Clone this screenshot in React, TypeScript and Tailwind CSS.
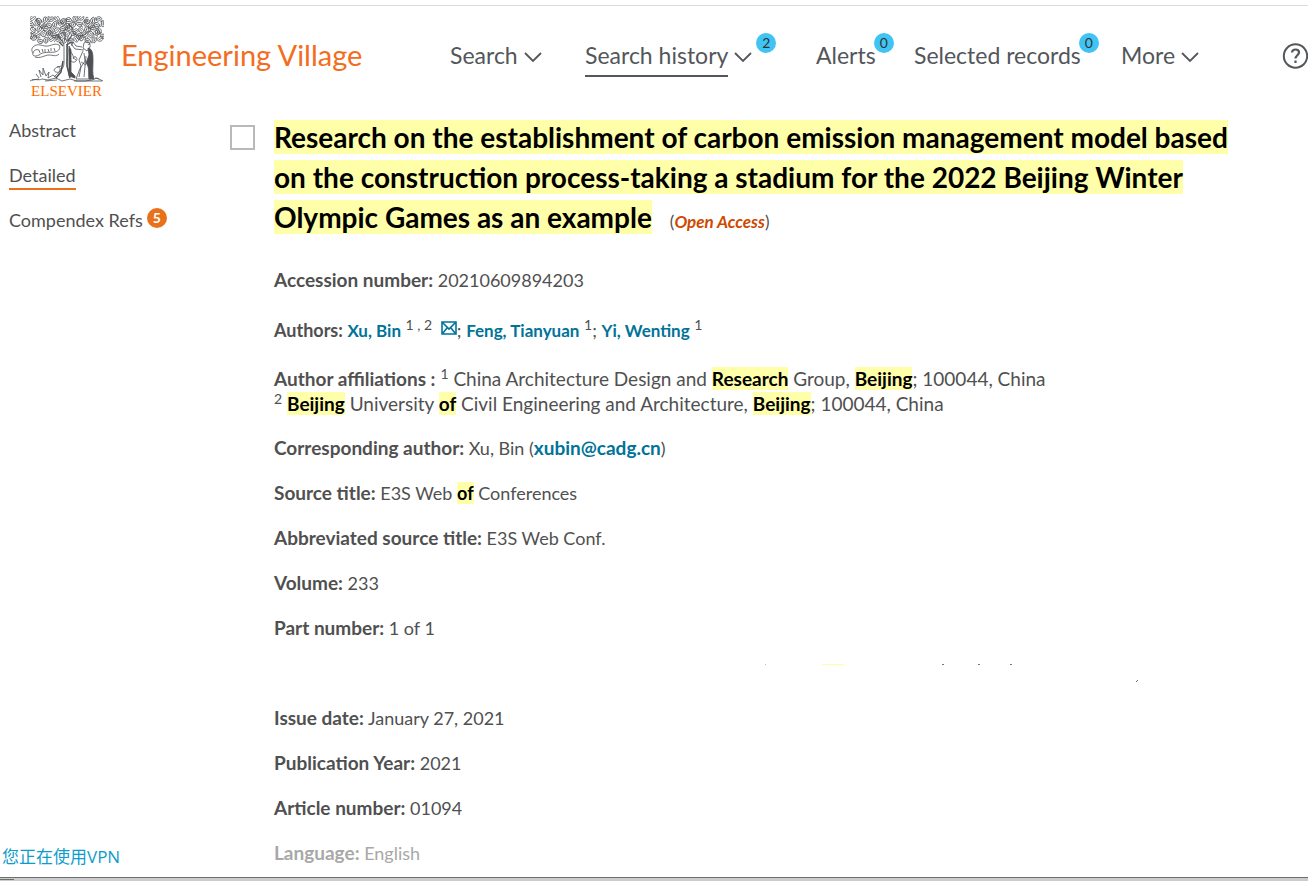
import React, { useState } from 'react';

interface NavItem {
  label: string;
  width: string;
  menu?: boolean;
  badge?: number;
  active?: boolean;
}

const NAV_ITEMS: NavItem[] = [
  { label: 'Search', width: 'w-[135px]', menu: true },
  { label: 'Search history', width: 'w-[231px]', menu: true, badge: 2, active: true },
  { label: 'Alerts', width: 'w-[98px]', badge: 0 },
  { label: 'Selected records', width: 'w-[207px]', badge: 0 },
  { label: 'More', width: 'w-[88px]', menu: true },
];

// Leaf clusters of the tree crown, one row per line
const LEAF_ROWS = [
  { y: 3, from: 3, to: 72 },
  { y: 8, from: 1, to: 73 },
  { y: 13, from: 3, to: 72 },
  { y: 18, from: 1, to: 73 },
  { y: 23, from: 4, to: 71 },
];

const leaves = LEAF_ROWS.flatMap((row, r) => {
  const items: { x: number; y: number; rot: number }[] = [];
  for (let x = row.from, i = 0; x <= row.to; x += 6, i++) {
    items.push({ x, y: row.y + ((i * 3 + r) % 4) - 1, rot: (i * 67 + r * 41) % 360 });
  }
  return items;
});

const TreeLogo = () => (
  <svg viewBox="0 0 74 66" className="w-[74px] h-[66px]" fill="none" stroke="#4d5054" strokeWidth="0.8" aria-hidden="true">
    {leaves.map((l, i) => (
      <path
        key={i}
        transform={`translate(${l.x} ${l.y}) rotate(${l.rot})`}
        d="M-3 1C-3-1-1-3 1-2C3-2 3 0 1 1C0 3-2 3-3 1M-2 1L1-1M2 2C3 3 4 1 3 0"
      />
    ))}
    <path d="M13 14l9 6 8-2M61 14l-9 6-9-2M36 2v10l-5 6M38 7l5 6" />
    {/* trunk */}
    <path d="M31 24c3 2 3 5 3 9v14c0 6-5 9-10 14M39 23c-2 3-2 7-1 11l-1 13c0 6 2 10 7 15" />
    <path d="M37 28v22l3 12M33 45l-2 11-5 6" strokeWidth="1.5" />
    <path d="M32 25l-4-5M38 25l4-6M35 24v-8M29 26l4 4M41 26l-4 3" strokeWidth="1.2" />
    {/* banner */}
    <path d="M3 31c5-5 10 0 15-1s7-3 11-1c2 3 0 6-4 7-6 1-11-1-16 3-4 2-7 1-6-2 1-3 3-4 6-3M3 31c-2 2-1 5 0 6M5 41c5 2 10-2 14-2 4 0 7 2 10-1" />
    <path d="M9 34l1 3m2-4 1 3m2-3v3m3-3 1 3m2-4v3m3-3 1 3" />
    {/* vine */}
    <path d="M40 44c4 5 9 0 6-3-2-1-4 1-2 2M40 35c4 4 3 8 6 9M24 54c3-5 7-3 6 0-1 4-6 2-6 0m3-3 4-1" />
    {/* standing figure */}
    <path d="M54 27c3-3 7 0 6 4l-3 4-4-3zM54 34l-9-1-3-4 1-3 3 4 6 1M42 30l-1-3 3-1M53 35l-4 9 2 6-5 13h15l-3-17 2-11" />
    <path d="M58 32c5 1 5 7 5 13 0 7-1 12 1 18h-5c-1-7 1-11-3-16l3-8z" fill="#4d5054" />
    <path d="M54 37l1 8-4 6-2 10M56 40l-1 10-1 11M51 46l5 3M40 27l2-1" />
    <path d="M39 30v30l6 2v-2l-4-4V34z" fill="#4d5054" />
    {/* ground */}
    <path d="M0 65c5-3 8 0 12-2l6 1 8-2 6 3 8-2 7 2h8l7-1 5-2 6 3M2 64l7-1M15 65l12-1M44 65h28" />
    <path d="M11 61l-2-7 4 5v-7l3 8 3-4-1 6 5-3 4 3M9 62l-3-4M65 62l4 1" />
  </svg>
);

const Chevron = () => (
  <svg viewBox="0 0 18 12" className="w-[18px] h-3 ml-1.5 mt-1 shrink-0" fill="none" stroke="#53565a" strokeWidth="1.8" aria-hidden="true">
    <path d="M1 2l8 8 8-8" />
  </svg>
);

const Envelope = () => (
  <svg viewBox="0 0 16 14" className="inline w-4 h-3.5 relative -top-1" fill="none" stroke="#007398" strokeWidth="1.6" aria-hidden="true">
    <path d="M1 1h14v12H1zM2 2l6 6 6-6M2 12l4-5M14 12l-4-5" />
  </svg>
);

const Mark = ({ children }: { children: React.ReactNode }) => (
  <mark className="bg-[#ffffaa] text-black font-bold">{children}</mark>
);

const Sup = ({ children }: { children: React.ReactNode }) => (
  <sup className="text-sm leading-none">{children}</sup>
);

const Author = ({ children }: { children: React.ReactNode }) => (
  <a href="#author" className="text-[#007398] font-bold text-[17px]">{children}</a>
);

const Field = ({ label, children }: { label: string; children: React.ReactNode }) => (
  <p className="mb-5">
    <b className="text-[19px] leading-none">{label}</b> {children}
  </p>
);

const App: React.FC = () => {
  const [selected, setSelected] = useState(false);

  return (
    <div className="min-h-screen flex flex-col bg-white text-[#505050] font-['Lato',sans-serif] overflow-x-hidden">
      <header className="mt-[5px] border-t border-[#dcdcdc] h-[105px] flex items-start shrink-0">
        <a href="#home" className="flex items-start ml-[29px] w-[421px] shrink-0">
          <span className="flex flex-col items-center w-[75px] mt-2.5">
            <TreeLogo />
            <span className="font-['Liberation_Serif',serif] text-[15px] leading-[18px] text-[#ff6c00]">ELSEVIER</span>
          </span>
          <span className="ml-[17px] mt-[31px] text-[29px] leading-9 text-[#f36d21] whitespace-nowrap">Engineering Village</span>
        </a>
        <nav className="flex mt-[31px] text-[23px] leading-9 text-[#53565a] whitespace-nowrap">
          {NAV_ITEMS.map(item => (
            <div key={item.label} className={`${item.width} shrink-0`}>
              <button className="relative flex items-start">
                <span className={item.active ? 'pb-0.5 border-b-2 border-[#53565a]' : 'pb-0.5 border-b-2 border-transparent'}>
                  {item.label}
                </span>
                {item.menu && <span className="mt-2.5 flex"><Chevron /></span>}
                {item.badge !== undefined && (
                  <span className={`absolute left-full -top-1 size-5 rounded-full bg-[#3fc4f3] text-[#323232] text-sm leading-5 text-center ${item.menu ? 'ml-1' : '-ml-0.5'}`}>
                    {item.badge}
                  </span>
                )}
              </button>
            </div>
          ))}
        </nav>
        <button aria-label="Help" className="ml-auto mt-[37px] shrink-0">
          <svg viewBox="0 0 26 26" className="size-[26px]" fill="none" stroke="#53565a" strokeWidth="2" aria-hidden="true">
            <circle cx="13.5" cy="13" r="11.7" />
            <path d="M10 9.5c.3-4 7-4 7 0 0 2.5-3.5 3-3.5 6M13.5 17.5v2.5" strokeWidth="2.2" />
          </svg>
        </button>
      </header>

      <div className="flex flex-1">
        <aside className="w-[230px] shrink-0 flex flex-col justify-between">
          <ul className="ml-[9px] mt-2 flex flex-col gap-5 text-lg leading-[25px]">
            <li><a href="#abstract">Abstract</a></li>
            <li><a href="#detailed" className="inline-block border-b-2 border-[#e9711c] -mb-0.5">Detailed</a></li>
            <li className="flex">
              <a href="#refs">Compendex Refs</a>
              <span className="ml-1 size-5 rounded-full bg-[#e9711c] text-white font-bold text-sm leading-5 text-center">5</span>
            </li>
          </ul>
          <a href="#vpn" className="ml-0.5 mb-2 text-[17px] leading-6 text-[#0d9ccc] font-['Open_Sans','Noto_Sans_CJK_SC',sans-serif]">您正在使用VPN</a>
        </aside>

        <main className="flex flex-1 items-start">
          <input
            type="checkbox"
            aria-label="Select record"
            checked={selected}
            onChange={() => setSelected(!selected)}
            className="appearance-none size-[25px] border-2 border-[#b9b9b9] checked:bg-[#b9b9b9] mt-[15px] mr-[19px] shrink-0"
          />
          <article className="flex-1 text-lg leading-[25px] mt-[7px]">
            <h1 className="text-[28px] leading-10 text-black font-bold mb-[31px] whitespace-nowrap">
              <Mark>Research on the establishment of carbon emission management model based</Mark><br />
              <Mark>on the construction process-taking a stadium for the 2022 Beijing Winter</Mark><br />
              <Mark>Olympic Games as an example</Mark>
              <span className="ml-[18px] text-[17px] leading-none font-normal text-[#505050]">
                (<a href="#open-access" className="italic font-bold text-[#cd4a00]">Open Access</a>)
              </span>
            </h1>

            <Field label="Accession number:">20210609894203</Field>
            <p className="mb-[23px] mt-[25px]">
              <b>Authors:</b> <Author>Xu, Bin</Author> <Sup>1 , 2</Sup>{' '}
              <a href="#mail" aria-label="Email author" className="ml-1"><Envelope /></a>;{' '}
              <Author>Feng, Tianyuan</Author> <Sup>1</Sup>; <Author>Yi, Wenting</Author> <Sup>1</Sup>
            </p>
            <p className="mb-5 text-[19px]">
              <b>Author affiliations :</b> <Sup>1</Sup> China Architecture Design and <Mark>Research</Mark> Group, <Mark>Beijing</Mark>; 100044, China
              <br />
              <Sup>2</Sup> <Mark>Beijing</Mark> University <Mark>of</Mark> Civil Engineering and Architecture, <Mark>Beijing</Mark>; 100044, China
            </p>
            <Field label="Corresponding author:">
              Xu, Bin (<a href="#corresponding" className="text-[#007398] font-bold text-[19px] leading-none">xubin@cadg.cn</a>)
            </Field>
            <Field label="Source title:">E3S Web <Mark>of</Mark> Conferences</Field>
            <Field label="Abbreviated source title:">E3S Web Conf.</Field>
            <Field label="Volume:">233</Field>
            <Field label="Part number:">1 of 1</Field>
            {/* blank row, only stray pixels left in it */}
            <svg viewBox="0 0 1034 25" className="block w-[1034px] h-[25px] mb-5" aria-hidden="true">
              <path d="M491 3.5h1" stroke="#a9c4e0" />
              <path d="M548 3.5h22" stroke="#ffffaa" />
              <path d="M668 3.5h2M704 3.5h2M736 3.5h2" stroke="#777777" />
              <path d="M862 21l2-2" stroke="#4b6f91" />
            </svg>
            <Field label="Issue date:">January 27, 2021</Field>
            <Field label="Publication Year:">2021</Field>
            <Field label="Article number:">01094</Field>
            <p className="text-[#a8a8a8] mb-2"><b className="text-[19px] leading-none">Language:</b> English</p>
          </article>
        </main>
      </div>

      <div className="h-1 border-t border-[#6e6e6e] bg-[#cccccc] shrink-0">
        <div className="w-3.5 h-px bg-[#6e6e6e] mt-px"></div>
      </div>
    </div>
  );
};

export default App;
